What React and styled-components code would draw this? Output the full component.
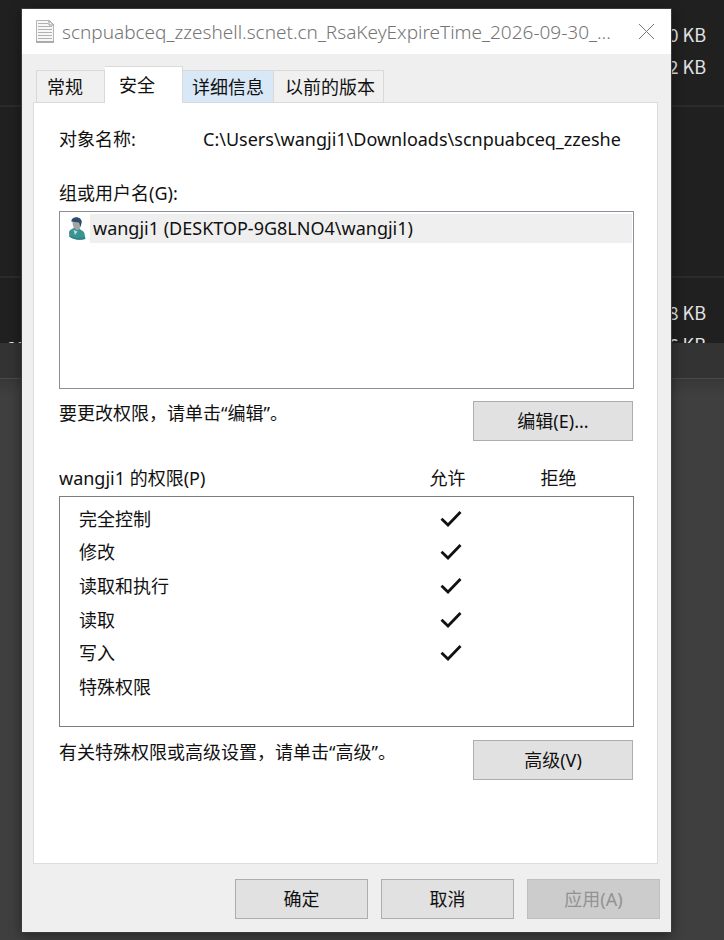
import React, { useState } from "react";
import styled, { createGlobalStyle } from "styled-components";

const GlobalStyle = createGlobalStyle`
  *, *::before, *::after { box-sizing: border-box; }
  body {
    margin: 0;
    background: #3f3f3f;
    color: #111;
    font-family: "Noto Sans", "Noto Sans CJK SC", sans-serif;
    font-size: 18px;
    line-height: 24px;
  }
  button, input { font: inherit; color: inherit; }
`;

const Desktop = styled.div`
  display: grid;
  grid-template-columns: minmax(0, 1fr);
  min-height: 100vh;
  overflow: hidden;
  > * { grid-area: 1 / 1; }
`;

const Backdrop = styled.div`
  display: flex;
  flex-direction: column;
  color: #e2e2e2;
`;

const FileList = styled.div`
  height: 343px;
  overflow: hidden;
  background: #202020;
`;

const FileGroup = styled.div`
  height: ${(p) => p.$height}px;
  padding: 18px 18px 0 7px;
  border-bottom: 2px solid #2b2b2b;
`;

const FileRow = styled.div`
  display: flex;
  justify-content: space-between;
  font-family: "Noto Sans CJK SC", sans-serif;
  font-size: 18px;
  line-height: 32px;
`;

const StatusStrip = styled.div`
  height: 36px;
  background: #333;
  border-bottom: 1px solid #4a4a4a;
`;

const LowerArea = styled.div`
  flex: 1;
  background: linear-gradient(#383838, #3f3f3f 16px);
`;

const Dialog = styled.section`
  z-index: 1;
  align-self: start;
  margin: 9px 53px 8px 22px;
  background: #efefef;
  box-shadow: 0 0 0 1px #3a3a3a, 0 3px 12px rgba(0, 0, 0, 0.45);
`;

const TitleBar = styled.header`
  display: flex;
  align-items: center;
  height: 45px;
  padding: 0 16px 0 14px;
  background: #fff;
`;

const Title = styled.h1`
  flex: 1;
  min-width: 0;
  margin: 0 0 0 8px;
  overflow: hidden;
  white-space: nowrap;
  font-size: 19px;
  font-weight: 300;
  color: #757575;
`;

const CloseButton = styled.button`
  display: flex;
  padding: 0;
  border: 0;
  background: none;
`;

const TabStrip = styled.div`
  display: flex;
  align-items: flex-end;
  height: 49px;
  padding-left: 14px;
`;

const Tab = styled.button`
  height: ${(p) => (p.$selected ? 37 : 33)}px;
  padding: 0 ${(p) => p.$end}px 0 ${(p) => p.$start}px;
  border: 1px solid #d9d9d9;
  border-bottom-color: ${(p) => (p.$selected ? "#fff" : "#d9d9d9")};
  border-left-width: ${(p) => (p.$joined ? 0 : 1)}px;
  background: ${(p) => (p.$selected ? "#fff" : p.$hot ? "#d8e8f7" : "#f0f0f0")};
  white-space: nowrap;
`;

const Panel = styled.div`
  min-height: 762px;
  margin: -1px 13px 0 11px;
  padding: 24px 23px 0 25px;
  border: 1px solid #dcdcdc;
  background: #fff;
`;

const ObjectRow = styled.div`
  display: flex;
  margin-bottom: 30px;
`;

const ObjectLabel = styled.label`
  width: 144px;
  flex: none;
`;

const ObjectPath = styled.input`
  flex: 1;
  min-width: 0;
  height: 24px;
  padding: 0;
  border: 0;
  outline: 0;
  background: none;
`;

const ListBox = styled.ul`
  height: 178px;
  margin: 6px 0 12px;
  padding: 1px;
  border: 1px solid #8a8f99;
  list-style: none;
`;

const UserItem = styled.li`
  display: flex;
  align-items: center;
  height: 30px;
  padding-left: 7px;
`;

const UserName = styled.span`
  flex: 1;
  margin-left: 4px;
  padding-left: 3px;
  line-height: 29px;
  background: #efefef;
`;

const HintRow = styled.div`
  display: flex;
  justify-content: space-between;
  align-items: flex-start;
  padding-right: 1px;
`;

const PushButton = styled.button`
  width: ${(p) => (p.$wide ? 160 : 133)}px;
  height: 40px;
  padding: 0;
  border: 1px solid #adadad;
  background: #e1e1e1;
  &:disabled {
    border-color: #bfbfbf;
    background: #ccc;
    color: #929292;
  }
`;

const PermissionTable = styled.table`
  display: block;
  margin: 25px 0 13px;
  th { padding: 0; font-weight: 400; }
  td { padding: 0; }
  th:first-child { text-align: left; }
  tr {
    display: grid;
    grid-template-columns: minmax(0, 1fr) 111px 111px;
    align-items: center;
    padding-right: 20px;
  }
  thead { display: block; height: 30px; }
  tbody {
    display: grid;
    grid-auto-rows: 1fr;
    height: 231px;
    padding: 5px 0 22px 19px;
    border: 1px solid #7d7d7d;
  }
`;

const CheckCell = styled.td`
  display: flex;
  justify-content: center;
  svg { margin-left: 8px; }
`;

const Footer = styled.footer`
  display: flex;
  justify-content: flex-end;
  gap: 13px;
  padding: 15px 11px 13px;
`;

function DocumentIcon() {
  return (
    <svg width="18" height="23" viewBox="0 0 18 23" aria-hidden="true">
      <path d="M.5.5h13l4 4v17.5H.5z" fill="#f7f7f7" stroke="#b5b5b5" />
      <path d="M13 .5v4.500h4.500z" fill="#fff" stroke="#9a9a9a" />
      <path d="M2 3.500H12M2 6.500H16M2 9.500H16M2 12.500H16M2 15.500H16M2 18.500H16" stroke="#b0b0b0" />
      <path d="M0 22h18" stroke="#808080" />
    </svg>
  );
}

function UserIcon() {
  return (
    <svg width="18" height="23" viewBox="0 0 18 23" aria-hidden="true">
      <path d="M1 15.500C1 13 4 12.500 6 10.500l5.500 1c.5 1.500 4.500 2 5 5l.8 5.500c-6 1.500-13 .5-16-2.500z" fill="#3b9491" />
      <path d="M5.500 13 7 18l2.500-3.500z" fill="#b8dfe8" />
      <path d="M4.500 5c0-2 2-3 4.500-3s4 2 4 4.500-1 6-3.500 6.500C6.500 13 4.500 9 4.500 5z" fill="#a1a5a6" />
      <path d="M3.300 4.500C3.500 1.500 6 .300 8.500.300s5.800 2.200 5.200 5.200L12.500 10 11 5.500z" fill="#2e4d6b" />
      <path d="M1.200 18.500c5 2.500 10 3 15.800 1.500l.3 2c-6 1.500-13 .5-16-2.500z" fill="#2b8581" />
    </svg>
  );
}

function CloseIcon() {
  return (
    <svg width="17" height="17" viewBox="0 0 17 17" fill="none" stroke="#777" aria-hidden="true">
      <path d="M1 1l15 15M16 1L1 16" />
    </svg>
  );
}

function CheckMark() {
  return (
    <svg width="22" height="18" viewBox="0 0 22 18" fill="none" stroke="#111" strokeWidth="2.800" role="img" aria-label="允许">
      <path d="M1.500 8.800 8 15 20.500 2" />
    </svg>
  );
}

const tabs = [
  { label: "常规", start: 10, end: 21 },
  { label: "安全", start: 14, end: 27 },
  { label: "详细信息", start: 9, end: 9, hot: true },
  { label: "以前的版本", start: 11, end: 8 },
];

const permissions = [
  ["完全控制", true],
  ["修改", true],
  ["读取和执行", true],
  ["读取", true],
  ["写入", true],
  ["特殊权限", false],
];

export default function App() {
  const [selected, setSelected] = useState(1);
  return (
    <Desktop>
      <GlobalStyle />
      <Backdrop>
        <FileList>
          <FileGroup $height={107}>
            <FileRow><span /><span>0 KB</span></FileRow>
            <FileRow><span /><span>2 KB</span></FileRow>
          </FileGroup>
          <FileGroup $height={171} />
          <FileGroup $height={90}>
            <FileRow><span /><span>8 KB</span></FileRow>
            <FileRow><span>scn</span><span>6 KB</span></FileRow>
          </FileGroup>
        </FileList>
        <StatusStrip />
        <LowerArea />
      </Backdrop>
      <Dialog role="dialog" aria-labelledby="dialog-title">
        <TitleBar>
          <DocumentIcon />
          <Title id="dialog-title">scnpuabceq_zzeshell.scnet.cn_RsaKeyExpireTime_2026-09-30_...</Title>
          <CloseButton aria-label="关闭"><CloseIcon /></CloseButton>
        </TitleBar>
        <TabStrip role="tablist">
          {tabs.map((tab, i) => (
            <Tab
              key={tab.label}
              role="tab"
              aria-selected={i === selected}
              $selected={i === selected}
              $hot={tab.hot}
              $joined={i > 0}
              $start={tab.start}
              $end={tab.end}
              onClick={() => setSelected(i)}
            >
              {tab.label}
            </Tab>
          ))}
        </TabStrip>
        <Panel role="tabpanel">
          <ObjectRow>
            <ObjectLabel htmlFor="object-path">对象名称:</ObjectLabel>
            <ObjectPath id="object-path" readOnly value="C:\Users\wangji1\Downloads\scnpuabceq_zzeshe" />
          </ObjectRow>
          <div id="users-label">组或用户名(G):</div>
          <ListBox role="listbox" aria-labelledby="users-label">
            <UserItem role="option" aria-selected="true">
              <UserIcon />
              <UserName>wangji1 (DESKTOP-9G8LNO4\wangji1)</UserName>
            </UserItem>
          </ListBox>
          <HintRow>
            <span>要更改权限，请单击“编辑”。</span>
            <PushButton $wide>编辑(E)...</PushButton>
          </HintRow>
          <PermissionTable>
            <thead>
              <tr>
                <th scope="col">wangji1 的权限(P)</th>
                <th scope="col">允许</th>
                <th scope="col">拒绝</th>
              </tr>
            </thead>
            <tbody>
              {permissions.map(([name, allowed]) => (
                <tr key={name}>
                  <th scope="row">{name}</th>
                  <CheckCell>{allowed && <CheckMark />}</CheckCell>
                  <td />
                </tr>
              ))}
            </tbody>
          </PermissionTable>
          <HintRow>
            <span>有关特殊权限或高级设置，请单击“高级”。</span>
            <PushButton $wide>高级(V)</PushButton>
          </HintRow>
        </Panel>
        <Footer>
          <PushButton>确定</PushButton>
          <PushButton>取消</PushButton>
          <PushButton disabled>应用(A)</PushButton>
        </Footer>
      </Dialog>
    </Desktop>
  );
}
